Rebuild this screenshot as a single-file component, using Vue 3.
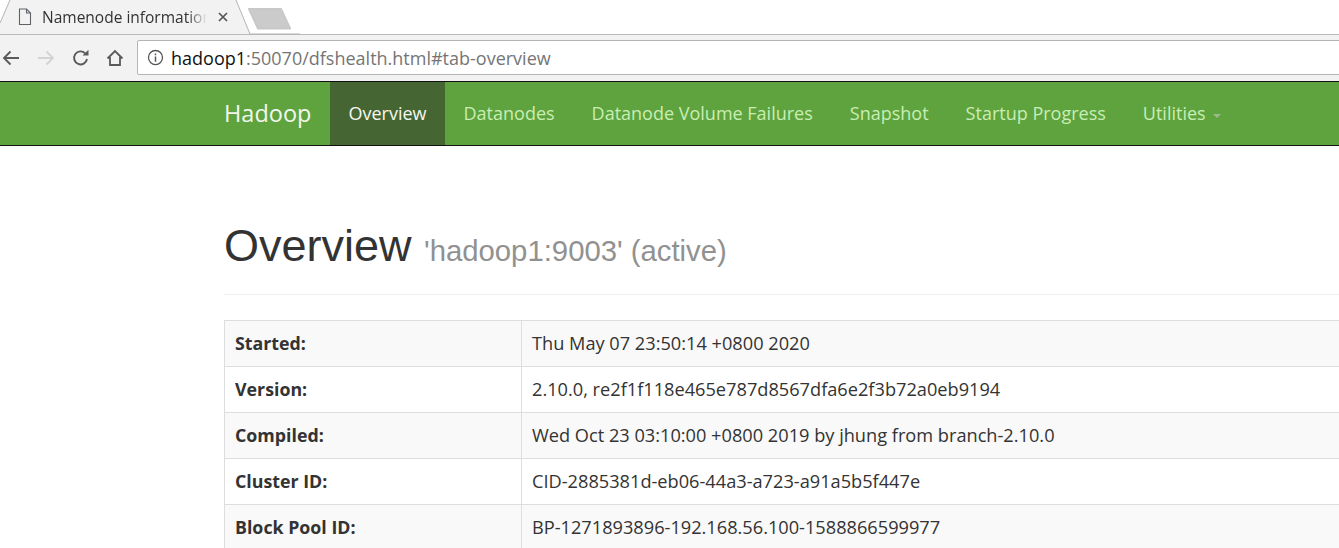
<script setup>
const navItems = [
  { label: 'Overview', active: true },
  { label: 'Datanodes' },
  { label: 'Datanode Volume Failures' },
  { label: 'Snapshot' },
  { label: 'Startup Progress' },
  { label: 'Utilities', caret: true },
]
const rows = [
  ['Started:', 'Thu May 07 23:50:14 +0800 2020'],
  ['Version:', '2.10.0, re2f1f118e465e787d8567dfa6e2f3b72a0eb9194'],
  ['Compiled:', 'Wed Oct 23 03:10:00 +0800 2019 by jhung from branch-2.10.0'],
  ['Cluster ID:', 'CID-2885381d-eb06-44a3-a723-a91a5b5f447e'],
  ['Block Pool ID:', 'BP-1271893896-192.168.56.100-1588866599977'],
]
</script>

<template>
  <div class="page">
    <div class="tabstrip">
      <svg class="tabshape" width="300" height="35" viewBox="0 0 300 35">
        <path d="M0 23 L10 0 H236 L250 34 H0 Z" fill="#f2f2f2" />
        <path d="M0 23 L10 0 M236 0 L250 34 H300" fill="none" stroke="#b4b4b4" />
        <path d="M249 9 H281 L290 28.500 H258 Z" fill="#cbcbcb" stroke="#c8c8c8" stroke-linejoin="round" stroke-width="2" />
      </svg>
      <svg class="fileicon" width="14" height="18" viewBox="0 0 14 18">
        <path d="M1.500 1 H8.500 L12.500 5 V16.500 H1.500 Z M8.500 1 V5 H12.500" fill="none" stroke="#5f6368" stroke-width="1.100" />
      </svg>
      <span class="tabtitle">Namenode information</span>
      <svg class="tabclose" width="10" height="10" viewBox="0 0 10 10">
        <path d="M1 1 L9 9 M9 1 L1 9" stroke="#555" stroke-width="1.700" />
      </svg>
    </div>

    <div class="toolbar">
      <svg class="tool back" width="20" height="18" viewBox="0 0 20 18">
        <path d="M18 9 H3 M9.500 2.500 L3 9 L9.500 15.500" fill="none" stroke="#5a5a5a" stroke-width="1.800" />
      </svg>
      <svg class="tool fwd" width="20" height="18" viewBox="0 0 20 18">
        <path d="M2 9 H17 M10.500 2.500 L17 9 L10.500 15.500" fill="none" stroke="#d3d3d3" stroke-width="1.800" />
      </svg>
      <svg class="tool reload" width="18" height="18" viewBox="0 0 18 18">
        <path d="M15 10 A6.500 6.500 0 1 1 13.200 4.300" fill="none" stroke="#5a5a5a" stroke-width="1.900" />
        <path d="M10.500 6.500 H16.500 V0.800 Z" fill="#5a5a5a" />
      </svg>
      <svg class="tool home" width="18" height="18" viewBox="0 0 18 18">
        <path d="M1.500 9.500 L9 2 L16.500 9.500 M4 8 V16 H14 V8" fill="none" stroke="#5a5a5a" stroke-width="1.800" />
      </svg>
      <div class="omnibox">
        <svg class="info" width="17" height="17" viewBox="0 0 16 16">
          <circle cx="8" cy="8" r="6.600" fill="none" stroke="#555" stroke-width="1.200" />
          <path d="M8 7 V12 M8 4.200 V5.800" stroke="#555" stroke-width="1.400" />
        </svg>
        <span class="url"><span class="host">hadoop1</span>:50070/dfshealth.html#tab-overview</span>
      </div>
    </div>

    <nav class="navbar">
      <a class="brand">Hadoop</a>
      <a v-for="item in navItems" :key="item.label" class="navlink" :class="{ active: item.active }">
        {{ item.label }}<span v-if="item.caret" class="caret"></span>
      </a>
    </nav>

    <main class="content">
      <div class="pageheader">
        <h1>Overview <small>'hadoop1:9003' (active)</small></h1>
      </div>
      <table class="info-table">
        <tbody>
          <tr v-for="row in rows" :key="row[0]">
            <th>{{ row[0] }}</th>
            <td>{{ row[1] }}</td>
          </tr>
        </tbody>
      </table>
    </main>
  </div>
</template>

<style>
html, body { margin: 0; background: #fff; overflow: hidden; }
</style>

<style scoped>
.page {
  width: 1339px;
  height: 548px;
  overflow: hidden;
  background: #fff;
  font-family: "Open Sans", "Noto Sans", sans-serif;
  color: #333;
}
.tabstrip {
  position: relative;
  height: 35px;
  display: flex;
  align-items: center;
  box-sizing: border-box;
  padding: 0 0 0 18px;
  border-bottom: 1px solid #b9b9b9;
}
.tabshape { position: absolute; left: 0; top: 0; }
.fileicon { position: relative; flex: none; }
.tabtitle {
  position: relative;
  margin-left: 10px;
  width: 165px;
  overflow: hidden;
  white-space: nowrap;
  font-size: 15.500px;
  color: #333;
  -webkit-mask-image: linear-gradient(90deg, #000 88%, transparent);
  mask-image: linear-gradient(90deg, #000 88%, transparent);
}
.tabclose { position: relative; margin-left: 11px; }
.toolbar {
  height: 46px;
  display: flex;
  align-items: center;
  background: #f2f2f2;
  box-sizing: border-box;
  padding: 0 0 1px 1px;
}
.tool { flex: none; }
.fwd { margin-left: 15px; }
.reload { margin-left: 16px; }
.home { margin-left: 16px; }
.omnibox {
  flex: 1;
  height: 35px;
  margin-left: 13px;
  margin-right: -5px;
  display: flex;
  align-items: center;
  box-sizing: border-box;
  background: #fff;
  border: 1px solid #b5b5b5;
  border-radius: 2px;
  padding-left: 9px;
}
.url {
  margin-left: 7px;
  font-size: 18px;
  color: #757575;
  white-space: nowrap;
}
.host { color: #111; }
.navbar {
  height: 65px;
  box-sizing: border-box;
  display: flex;
  align-items: stretch;
  padding-left: 224px;
  background: #5fa33e;
  border-top: 1px solid #111;
  border-bottom: 1px solid #111;
}
.brand {
  font-size: 23.500px;
  color: #f2f7ee;
  line-height: 63px;
  width: 106px;
}
.navlink {
  padding: 0 18.500px;
  font-size: 18px;
  line-height: 63px;
  color: #c8eeb4;
  white-space: nowrap;
}
.navlink.active {
  background: #456533;
  color: #f4f8f0;
}
.caret {
  display: inline-block;
  margin-left: 7px;
  vertical-align: 2px;
  border-top: 4px solid #9db78f;
  border-left: 4px solid transparent;
  border-right: 4px solid transparent;
}
.content {
  padding: 0 0 0 224px;
  margin-right: -10px;
}
.pageheader {
  margin-top: 68px;
  padding-bottom: 11px;
  border-bottom: 1px solid #eee;
}
h1 {
  margin: 0;
  font-family: "Liberation Sans", Arial, sans-serif;
  font-weight: 400;
  font-size: 45px;
  line-height: 64px;
  color: #333;
}
small {
  font-size: 29.300px;
  color: #919191;
}
.info-table {
  width: 100%;
  margin-top: 25px;
  border-collapse: collapse;
  font-size: 18.200px;
}
.info-table th,
.info-table td {
  height: 46px;
  box-sizing: border-box;
  padding: 0 10px 2px;
  border: 1px solid #ddd;
  text-align: left;
  white-space: nowrap;
}
.info-table th {
  width: 297px;
  font-weight: 700;
  font-size: 17.800px;
  background: #f9f9f9;
}
.info-table tr:nth-child(even) th { background: #fff; }
.info-table tr:nth-child(odd) td { background: #f9f9f9; }
.info-table tr:nth-child(even) td { background: #fff; }
</style>
